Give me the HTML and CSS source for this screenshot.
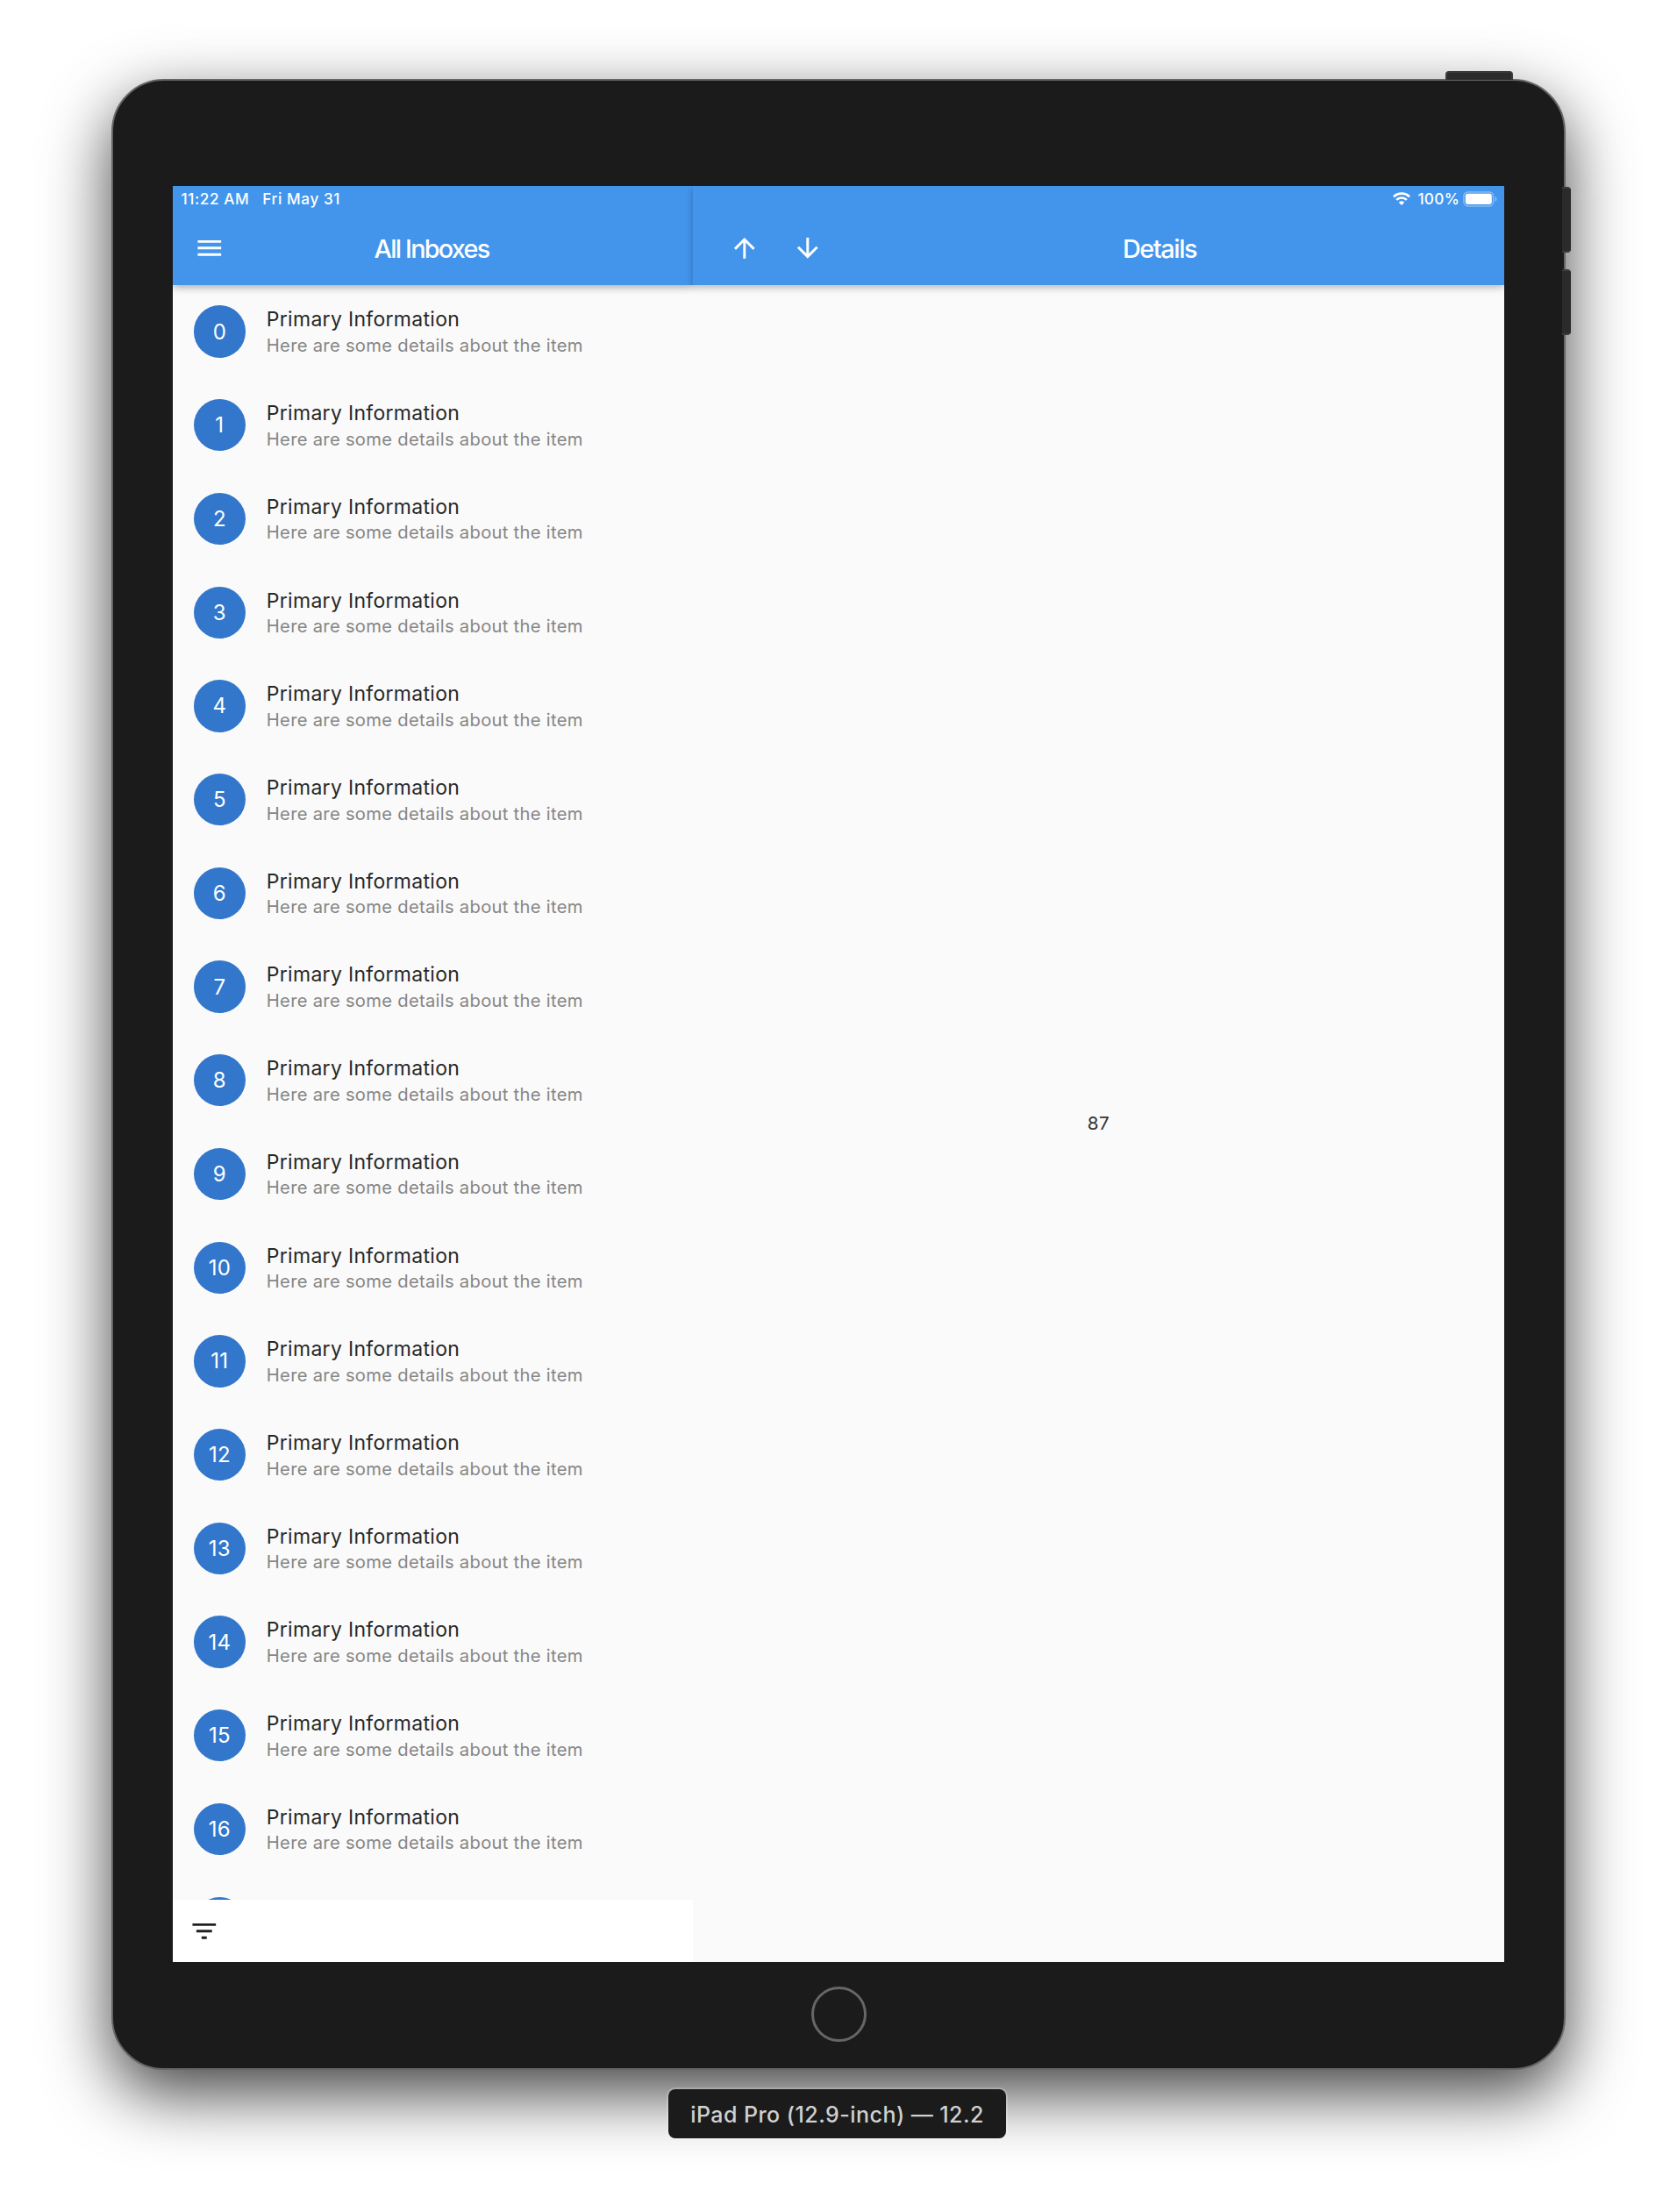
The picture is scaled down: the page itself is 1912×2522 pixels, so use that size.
FILE: index.html
```
<!DOCTYPE html>
<html lang="en">
<head>
<meta charset="utf-8">
<title>All Inboxes</title>
<link rel="stylesheet" href="styles.css">
</head>
<body>
<main class="device">
  <span class="button button-power"></span>
  <span class="button button-volume-up"></span>
  <span class="button button-volume-down"></span>
  <div class="screen">
    <section class="master">
      <header class="appbar">
        <div class="status status-left"><span class="time">11:22 AM</span><span class="date">Fri May 31</span></div>
        <div class="toolbar">
          <svg class="icon" viewBox="0 0 24 24"><path d="M3 18h18v-2H3v2zm0-5h18v-2H3v2zm0-7v2h18V6H3z"/></svg>
          <h1 class="title title-master">All Inboxes</h1>
        </div>
      </header>
      <ul class="list">
        <li class="row"><span class="avatar">0</span><div class="text"><p class="primary">Primary Information</p><p class="secondary">Here are some details about the item</p></div></li>
        <li class="row"><span class="avatar">1</span><div class="text"><p class="primary">Primary Information</p><p class="secondary">Here are some details about the item</p></div></li>
        <li class="row"><span class="avatar">2</span><div class="text"><p class="primary">Primary Information</p><p class="secondary">Here are some details about the item</p></div></li>
        <li class="row"><span class="avatar">3</span><div class="text"><p class="primary">Primary Information</p><p class="secondary">Here are some details about the item</p></div></li>
        <li class="row"><span class="avatar">4</span><div class="text"><p class="primary">Primary Information</p><p class="secondary">Here are some details about the item</p></div></li>
        <li class="row"><span class="avatar">5</span><div class="text"><p class="primary">Primary Information</p><p class="secondary">Here are some details about the item</p></div></li>
        <li class="row"><span class="avatar">6</span><div class="text"><p class="primary">Primary Information</p><p class="secondary">Here are some details about the item</p></div></li>
        <li class="row"><span class="avatar">7</span><div class="text"><p class="primary">Primary Information</p><p class="secondary">Here are some details about the item</p></div></li>
        <li class="row"><span class="avatar">8</span><div class="text"><p class="primary">Primary Information</p><p class="secondary">Here are some details about the item</p></div></li>
        <li class="row"><span class="avatar">9</span><div class="text"><p class="primary">Primary Information</p><p class="secondary">Here are some details about the item</p></div></li>
        <li class="row"><span class="avatar">10</span><div class="text"><p class="primary">Primary Information</p><p class="secondary">Here are some details about the item</p></div></li>
        <li class="row"><span class="avatar">11</span><div class="text"><p class="primary">Primary Information</p><p class="secondary">Here are some details about the item</p></div></li>
        <li class="row"><span class="avatar">12</span><div class="text"><p class="primary">Primary Information</p><p class="secondary">Here are some details about the item</p></div></li>
        <li class="row"><span class="avatar">13</span><div class="text"><p class="primary">Primary Information</p><p class="secondary">Here are some details about the item</p></div></li>
        <li class="row"><span class="avatar">14</span><div class="text"><p class="primary">Primary Information</p><p class="secondary">Here are some details about the item</p></div></li>
        <li class="row"><span class="avatar">15</span><div class="text"><p class="primary">Primary Information</p><p class="secondary">Here are some details about the item</p></div></li>
        <li class="row"><span class="avatar">16</span><div class="text"><p class="primary">Primary Information</p><p class="secondary">Here are some details about the item</p></div></li>
        <li class="row"><span class="avatar"></span></li>
      </ul>
      <footer class="bottombar">
        <svg class="icon icon-dark" viewBox="0 0 24 24"><path d="M10 18h4v-2h-4v2zM3 6v2h18V6H3zm3 7h12v-2H6v2z"/></svg>
      </footer>
    </section>
    <section class="detail">
      <header class="appbar appbar-detail">
        <div class="status status-right">
          <svg class="wifi" viewBox="0 0 20 15"><g fill="none" stroke="#fff" stroke-width="2.7"><path d="M.9 5.4a12.9 12.9 0 0 1 18.2 0"/><path d="M4.2 8.9a8.2 8.2 0 0 1 11.6 0"/></g><path fill="#fff" d="M6.8 11.8a4.7 4.7 0 0 1 6.4 0L10 15z"/></svg>
          <span class="percent">100%</span>
          <svg class="battery" viewBox="0 0 39 18"><rect x=".9" y=".9" width="33.7" height="16" rx="4.6" fill="none" stroke="#fff" stroke-opacity=".35" stroke-width="1.5"/><rect x="2.8" y="2.8" width="30" height="12.2" rx="2.4" fill="#fff"/><path d="M36.6 5.9c2.4 1 2.4 5 0 6z" fill="#fff" fill-opacity=".4"/></svg>
        </div>
        <div class="toolbar toolbar-detail">
          <svg class="icon" viewBox="0 0 24 24"><path d="M4 12l1.41 1.41L11 7.83V20h2V7.83l5.58 5.59L20 12l-8-8-8 8z"/></svg>
          <svg class="icon" viewBox="0 0 24 24"><path d="M20 12l-1.41-1.41L13 16.17V4h-2v12.17l-5.58-5.59L4 12l8 8 8-8z"/></svg>
          <h2 class="title title-detail">Details</h2>
        </div>
      </header>
      <div class="content">87</div>
    </section>
  </div>
  <div class="home"></div>
</main>
<div class="device-name">iPad Pro (12.9-inch) — 12.2</div>
</body>
</html>
```
FILE: styles.css
```
* { box-sizing: border-box; }

body {
  margin: 0;
  height: 2522px;
  padding: 90px 0 0 127px;
  background: #fff;
  font-family: Inter, "Liberation Sans", sans-serif;
  overflow: hidden;
}

h1, h2, p, ul { margin: 0; padding: 0; list-style: none; }

.device {
  position: relative;
  display: flex;
  flex-direction: column;
  align-items: center;
  width: 1658px;
  height: 2270px;
  padding-top: 120px;
  background: #1b1b1b;
  border: 2px solid #666;
  border-radius: 60px;
  box-shadow: 0 27px 75px rgba(0, 0, 0, .74);
}

.button {
  position: absolute;
  background: #2b2b2b;
  border: 2px solid #3a3a3a;
}
.button-power {
  left: 1519px;
  top: -11px;
  width: 77px;
  height: 10px;
  border-bottom: 0;
  border-radius: 4px 4px 0 0;
}
.button-volume-up,
.button-volume-down {
  left: 1652px;
  width: 10px;
  height: 75px;
  border-left: 0;
  border-right-color: #2b2b2b;
  border-radius: 0 4px 4px 0;
}
.button-volume-up { top: 121px; }
.button-volume-down { top: 215px; }

.screen {
  display: flex;
  width: 1518px;
  height: 2025px;
  overflow: hidden;
  background: #fafafa;
}

.master {
  display: flex;
  flex-direction: column;
  width: 593px;
  height: 100%;
}

.detail {
  display: flex;
  flex-direction: column;
  flex: 1;
}

.appbar {
  position: relative;
  flex: none;
  height: 112.7px;
  background: #4395ec;
  color: #fff;
  box-shadow: 0 2px 9px rgba(0, 0, 0, .36);
}
.appbar-detail { box-shadow: 0 3px 8px rgba(0, 0, 0, .26); }

.status {
  display: flex;
  align-items: center;
  height: 29.6px;
  font-size: 17.2px;
  font-weight: 450;
  white-space: nowrap;
}
.status-left {
  gap: 15px;
  padding-left: 9.5px;
  letter-spacing: .58px;
}
.status-right {
  justify-content: flex-end;
  padding-right: 8px;
  letter-spacing: .3px;
}
.wifi { width: 20px; height: 15px; margin-right: 8.5px; }
.percent { margin-right: 4px; }
.battery { width: 39px; height: 18px; }

.toolbar {
  display: grid;
  grid-template-columns: 36px 1fr 36px;
  align-items: center;
  height: 83px;
  padding: 0 23.7px;
}
.toolbar-detail {
  grid-template-columns: 36px 36px auto;
  column-gap: 35.3px;
  justify-content: start;
  padding: 0 0 0 41.3px;
}

.icon { display: block; width: 35.6px; height: 35.6px; fill: #fff; }
.icon-dark { fill: #212121; }

.title {
  padding-top: 1px;
  font-size: 28.8px;
  font-weight: 550;
  line-height: 36px;
  white-space: nowrap;
}
.title-master { padding-right: 3px; text-align: center; letter-spacing: -1.75px; }
.title-detail { margin-left: 306px; letter-spacing: -1.4px; }

.list { flex: 1; overflow: hidden; }

.row {
  display: flex;
  gap: 23.8px;
  height: 106.73px;
  padding: 23.7px 23.7px 0;
}

.avatar {
  display: flex;
  flex: none;
  align-items: center;
  justify-content: center;
  width: 59.3px;
  height: 59.3px;
  border-radius: 50%;
  background: #3277cb;
  color: #fff;
  font-size: 24px;
  letter-spacing: .2px;
}

.text { padding-top: 1px; white-space: nowrap; }
.primary { font-size: 23px; line-height: 30px; letter-spacing: .3px; color: #282828; }
.secondary { margin-top: .6px; font-size: 20.2px; line-height: 28px; letter-spacing: .29px; color: #868686; }

.bottombar {
  display: flex;
  flex: none;
  align-items: center;
  height: 71px;
  padding-left: 17.8px;
  background: #fff;
}

.content {
  display: flex;
  flex: 1;
  align-items: center;
  justify-content: center;
  font-size: 20.7px;
  letter-spacing: .5px;
  color: #333;
}

.home {
  width: 63px;
  height: 63px;
  margin-top: 28px;
  border: 3px solid #666;
  border-radius: 50%;
}

.device-name {
  position: relative;
  display: flex;
  align-items: center;
  justify-content: center;
  width: 385px;
  height: 56px;
  margin: 22px 0 0 635px;
  padding-top: 2px;
  border-radius: 8px;
  background: #1b1b1b;
  box-shadow: 0 0 0 2px rgba(255, 255, 255, .2);
  color: #d0d0d0;
  font-size: 25px;
  font-weight: 450;
  letter-spacing: .46px;
  white-space: nowrap;
}
```
